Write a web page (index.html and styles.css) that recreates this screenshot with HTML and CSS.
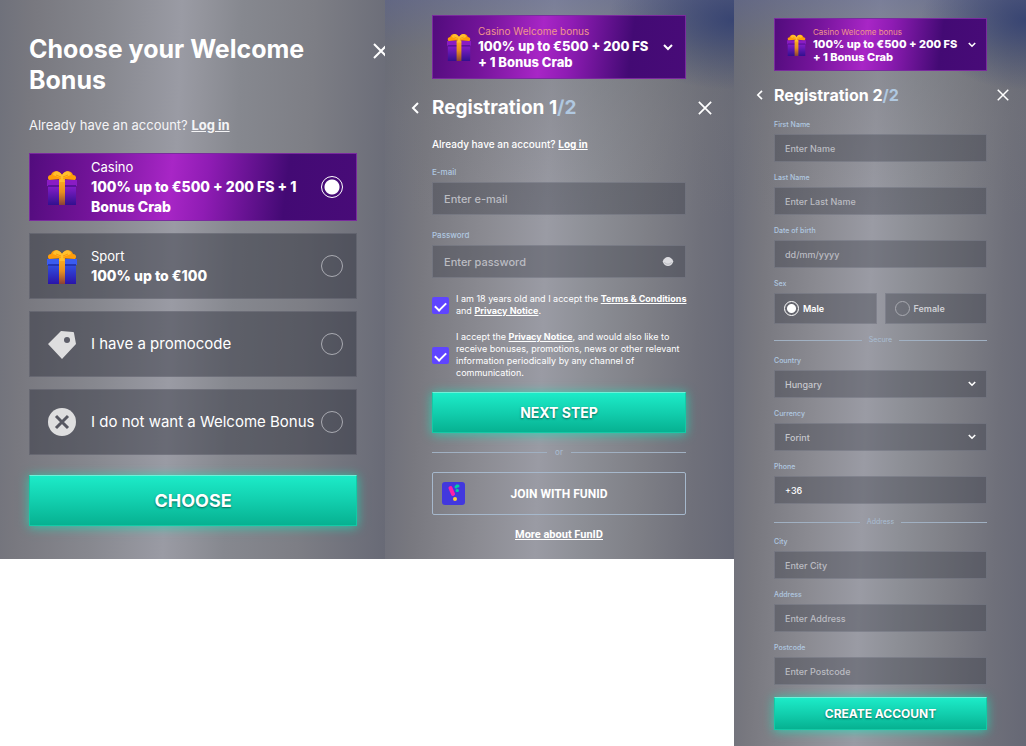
FILE: index.html
```html
<!DOCTYPE html>
<html lang="en">
<head>
<meta charset="utf-8">
<title>Welcome Bonus Registration</title>
<link rel="stylesheet" href="styles.css">
</head>

<body>
<!-- shared icons -->
<svg class="defs" aria-hidden="true">
	<defs>
		<linearGradient id="purple" x1="0" y1="0" x2="0" y2="1"><stop offset="0" stop-color="#8f1fd0"/><stop offset="1" stop-color="#31108f"/></linearGradient>
		<linearGradient id="blue" x1="0" y1="0" x2="0" y2="1"><stop offset="0" stop-color="#3355e8"/><stop offset="1" stop-color="#2a14a8"/></linearGradient>
		<linearGradient id="ribbon" x1="0" y1="0" x2="0" y2="1"><stop offset="0" stop-color="#ffb01f"/><stop offset="0.5" stop-color="#e8901f"/><stop offset="1" stop-color="#8a4038"/></linearGradient>
	</defs>
	<symbol id="bow" viewBox="0 0 30 35">
		<rect x="12" y="9" width="6" height="26" fill="url(#ribbon)"/>
		<path d="M14 9 L2 10 C0 8 1 5 4 5 C5 1 11 -1 15 5 C19 -1 25 1 26 5 C29 5 30 8 28 10 L16 9 Z" fill="#ff9d0a"/>
		<path d="M14 8 L6 5 C7 0 12 0 15 5 C18 0 23 0 24 5 L16 8 L18 12 H12 Z" fill="#ffc02e"/>
		<path d="M14 7 L9 5 M16 7 L21 5" stroke="#f59a10" stroke-width="1"/>
	</symbol>
	<symbol id="gift-casino" viewBox="0 0 30 35">
		<rect x="1" y="14" width="28" height="21" fill="url(#purple)"/>
		<rect x="0" y="10" width="30" height="6" fill="#8a1cc4"/>
		<rect x="1" y="15" width="28" height="2" fill="#5a129c"/>
		<use href="#bow"/>
	</symbol>
	<symbol id="gift-sport" viewBox="0 0 30 35">
		<rect x="1" y="14" width="28" height="21" fill="url(#blue)"/>
		<rect x="0" y="10" width="30" height="6" fill="#3a5cf0"/>
		<rect x="1" y="15" width="28" height="2" fill="#2436b4"/>
		<use href="#bow"/>
	</symbol>
	<symbol id="cross" viewBox="0 0 16 16"><path d="M1 1 L15 15 M15 1 L1 15" fill="none" stroke="#fff" stroke-width="2"/></symbol>
	<symbol id="back" viewBox="0 0 8 12"><path d="M7 1 L2 6 L7 11" fill="none" stroke="#fff" stroke-width="2"/></symbol>
	<symbol id="down" viewBox="0 0 10 7"><path d="M1 1 L5 5 L9 1" fill="none" stroke="#fff" stroke-width="2"/></symbol>
</svg>

<main class="screens">

<!-- bonus choice -->
<form class="panel panel-bonus">
	<header class="head">
		<h1>Choose your Welcome Bonus</h1>
		<button type="button" class="icon-btn" aria-label="Close"><svg class="cross"><use href="#cross"/></svg></button>
	</header>
	<p class="login">Already have an account? <a href="#">Log in</a></p>
	<div class="options">
		<label class="option option-active">
			<svg class="option-icon"><use href="#gift-casino"/></svg>
			<span class="option-text">Casino <b>100% up to €500 + 200 FS + 1 Bonus Crab</b></span>
			<input type="radio" name="bonus" checked>
		</label>
		<label class="option">
			<svg class="option-icon"><use href="#gift-sport"/></svg>
			<span class="option-text">Sport <b>100% up to €100</b></span>
			<input type="radio" name="bonus">
		</label>
		<label class="option">
			<svg class="option-icon" viewBox="0 0 30 35">
				<path d="M1 17 L14 4 L26 5 Q27 5 27 6 L29 17 L15 32 Z" fill="#dededf"/>
				<circle cx="20" cy="13" r="3" fill="#5c5d68"/>
			</svg>
			<span class="option-text option-plain">I have a promocode</span>
			<input type="radio" name="bonus">
		</label>
		<label class="option">
			<svg class="option-icon" viewBox="0 0 30 35">
				<circle cx="15" cy="17" r="14" fill="#dededf"/>
				<path d="M9 11 L21 23 M21 11 L9 23" stroke="#565761" stroke-width="3"/>
			</svg>
			<span class="option-text option-plain">I do not want a Welcome Bonus</span>
			<input type="radio" name="bonus">
		</label>
	</div>
	<button type="button" class="primary">CHOOSE</button>
</form>

<!-- step 1 -->
<form class="panel panel-step panel-one">
	<button type="button" class="banner">
		<svg class="gift"><use href="#gift-casino"/></svg>
		<span class="banner-text"><small>Casino Welcome bonus</small><b>100% up to €500 + 200 FS + 1 Bonus Crab</b></span>
		<svg class="down"><use href="#down"/></svg>
	</button>
	<header class="head">
		<button type="button" class="icon-btn" aria-label="Back"><svg class="back"><use href="#back"/></svg></button>
		<h2>Registration 1<span>/2</span></h2>
		<button type="button" class="icon-btn" aria-label="Close"><svg class="cross"><use href="#cross"/></svg></button>
	</header>
	<p class="login">Already have an account? <a href="#">Log in</a></p>
	<div class="field">
		<label for="email">E-mail</label>
		<input class="control" id="email" type="email" placeholder="Enter e-mail">
	</div>
	<div class="field">
		<label for="password">Password</label>
		<div class="control control-group">
			<input id="password" type="password" placeholder="Enter password">
			<button type="button" class="icon-btn" aria-label="Show password">
				<svg class="eye" viewBox="0 0 12 10"><path d="M0 5 Q2 0 6 0 Q10 0 12 5 Q10 10 6 10 Q2 10 0 5 Z" fill="#dcdce0"/><path d="M2 6 Q6 10 10 6" fill="none" stroke="#b4b5bb"/></svg>
			</button>
		</div>
	</div>
	<div class="agree">
		<input type="checkbox" id="age" checked>
		<label for="age">I am 18 years old and I accept the <a href="#">Terms &amp; Conditions</a> and <a href="#">Privacy Notice</a>.</label>
	</div>
	<div class="agree">
		<input type="checkbox" id="news" checked>
		<label for="news">I accept the <a href="#">Privacy Notice</a>, and would also like to receive bonuses, promotions, news or other relevant information periodically by any channel of communication.</label>
	</div>
	<button type="button" class="primary">NEXT STEP</button>
	<div class="divider">or</div>
	<button type="button" class="funid">
		<svg viewBox="0 0 23 23">
			<rect width="23" height="23" rx="3" fill="#4238de"/>
			<path d="M8.500 6 L11 12" stroke="#ff1fa8" stroke-width="4" stroke-linecap="round"/>
			<path d="M14 5 L15 4 H16 M15 8.500 H15.500" fill="none" stroke="#00d0a4" stroke-width="3" stroke-linecap="round"/>
			<circle cx="13" cy="17" r="2" fill="#ffcf3a"/>
		</svg>
		<span>JOIN WITH FUNID</span>
	</button>
	<a class="more" href="#">More about FunID</a>
</form>

<!-- step 2 -->
<form class="panel panel-step panel-two">
	<button type="button" class="banner">
		<svg class="gift"><use href="#gift-casino"/></svg>
		<span class="banner-text"><small>Casino Welcome bonus</small><b>100% up to €500 + 200 FS + 1 Bonus Crab</b></span>
		<svg class="down"><use href="#down"/></svg>
	</button>
	<header class="head">
		<button type="button" class="icon-btn" aria-label="Back"><svg class="back"><use href="#back"/></svg></button>
		<h2>Registration 2<span>/2</span></h2>
		<button type="button" class="icon-btn" aria-label="Close"><svg class="cross"><use href="#cross"/></svg></button>
	</header>
	<div class="field">
		<label for="first">First Name</label>
		<input class="control" id="first" type="text" placeholder="Enter Name">
	</div>
	<div class="field">
		<label for="last">Last Name</label>
		<input class="control" id="last" type="text" placeholder="Enter Last Name">
	</div>
	<div class="field">
		<label for="birth">Date of birth</label>
		<input class="control" id="birth" type="text" placeholder="dd/mm/yyyy">
	</div>
	<fieldset class="sex">
		<legend>Sex</legend>
		<label><input type="radio" name="sex" checked> Male</label>
		<label><input type="radio" name="sex"> Female</label>
	</fieldset>
	<div class="divider">Secure</div>
	<div class="field">
		<label for="country">Country</label>
		<div class="control control-group">
			<select id="country"><option>Hungary</option></select>
			<svg class="down"><use href="#down"/></svg>
		</div>
	</div>
	<div class="field">
		<label for="currency">Currency</label>
		<div class="control control-group">
			<select id="currency"><option>Forint</option></select>
			<svg class="down"><use href="#down"/></svg>
		</div>
	</div>
	<div class="field">
		<label for="phone">Phone</label>
		<input class="control" id="phone" type="tel" value="+36">
	</div>
	<div class="divider">Address</div>
	<div class="field">
		<label for="city">City</label>
		<input class="control" id="city" type="text" placeholder="Enter City">
	</div>
	<div class="field">
		<label for="address">Address</label>
		<input class="control" id="address" type="text" placeholder="Enter Address">
	</div>
	<div class="field">
		<label for="postcode">Postcode</label>
		<input class="control" id="postcode" type="text" placeholder="Enter Postcode">
	</div>
	<button type="button" class="primary">CREATE ACCOUNT</button>
</form>

</main>
</body>
</html>
```
FILE: styles.css
```css
* { box-sizing: border-box; }
body { margin: 0; background: white; color: white; font-family: Inter, "Liberation Sans", sans-serif; }
h1, h2, p { margin: 0; }
a { color: inherit; font-weight: bold; }
svg { display: block; flex: none; }
button, input, select { font: inherit; color: inherit; }
button { border: none; padding: 0; cursor: pointer; }
.defs { position: absolute; width: 0; height: 0; }

.screens { display: grid; grid-template-columns: 385fr 349fr 292fr; align-items: start; }
.panel {
	display: flex; flex-direction: column; overflow: hidden;
	background: linear-gradient(92deg, #6f717b 0%, #78787f 8%, #87888f 27%, #9a9ba4 45%, #94959d 50%, #86888f 60%, #7d7e85 78%, #686a76 100%);
}
.panel-bonus { padding: 34px 28px 33px 29px; }
.panel-step {
	background:
		radial-gradient(ellipse 36% 70px at 100% 20px, rgba(48, 62, 112, 0.85), transparent),
		linear-gradient(rgba(90, 98, 142, 0.5), rgba(105, 108, 115, 0.35) 50px, rgba(115, 116, 122, 0.25) 120px, transparent 220px),
		linear-gradient(92deg, #6a6c78 0%, #78787f 12%, #8b8b92 30%, #9a9ba4 46%, #8d8f96 58%, #7e7f86 74%, #6f707a 88%, #666875 100%);
}
.panel-one { padding: 15px 48px 16px 47px; }
.panel-two { padding: 18px 39px 16px 40px; }

/* headings */
.head { display: flex; align-items: center; }
.head h1, .head h2 { flex: 1; }
.head h1 { font-size: 25px; line-height: 31px; }
.head h2 span { color: #b0c8e0; }
.icon-btn { background: none; }
.panel-bonus .head { align-items: flex-start; gap: 16px; margin-right: -32px; }
.panel-bonus .head .icon-btn { margin-top: 9px; }
.panel-one .head { margin: 16px -26px 0 -21px; gap: 13px; }
.panel-one h2 { font-size: 19px; line-height: 26px; }
.panel-two .head { margin: 12px -22px 12px -18px; gap: 11px; }
.panel-two h2 { font-size: 16px; line-height: 24px; }
.cross { width: 16px; height: 16px; }
.back { width: 8px; height: 12px; }
.panel-one .cross { width: 14px; height: 14px; }
.panel-two .cross { width: 12px; height: 12px; }
.panel-two .back { width: 7px; height: 10px; }

.panel-bonus .login { margin: 20px 0 19px; font-size: 13px; line-height: 18px; color: #f4f4f6; }
.panel-one .login { margin: 15px 0 13px; font-size: 10px; line-height: 16px; font-weight: 500; }

/* bonus options */
.options { display: flex; flex-direction: column; gap: 12px; }
.option { display: flex; align-items: center; gap: 14px; min-height: 66px; padding: 3px 13px 3px 17px; background: rgba(32, 35, 48, 0.4); border: 1px solid rgba(150, 152, 165, 0.25); }
.option-active, .banner { background: linear-gradient(97deg, #520c7d 0%, #74149a 20%, #a826c6 43%, #8f1cb4 54%, #430a74 78%, #480b78 100%); border: 1px solid #7a2b9e; }
.option-icon { width: 30px; height: 35px; }
.option-text { flex: 1; min-width: 0; font-size: 13px; line-height: 20px; color: white; }
.option-text b { display: block; font-size: 14px; font-weight: 800; }
.option-plain { font-size: 15px; white-space: nowrap; }

input[type=radio] { appearance: none; flex: none; width: 22px; height: 22px; margin: 0; border: 1px solid #a9aab1; border-radius: 50%; }
input[type=radio]:checked { border-color: white; background: radial-gradient(circle, white 7px, transparent 8px); }

/* bonus banner */
.banner { display: flex; align-items: center; text-align: left; }
.banner-text { flex: 1; }
.banner small, .banner b { display: block; }
.banner small { color: #f0968c; }
.banner b { font-weight: 800; }
.panel-one .banner { height: 64px; padding: 0 12px 0 14px; gap: 7px; }
.panel-one .banner small { font-size: 10px; line-height: 14px; }
.panel-one .banner b { font-size: 13px; line-height: 16px; }
.panel-one .gift { width: 24px; height: 28px; }
.panel-two .banner { height: 53px; padding: 0 10px 0 12px; gap: 7px; }
.panel-two .banner small { font-size: 8px; line-height: 12px; }
.panel-two .banner b { font-size: 11px; line-height: 13px; }
.panel-two .gift { width: 19px; height: 22px; }
.down { width: 10px; height: 7px; }
.panel-two .down { width: 8px; height: 6px; }

/* fields */
.field label, .sex legend { display: block; padding: 0; color: #b0c8e0; font-weight: 500; }
.control { display: block; width: 100%; background: rgba(48, 51, 64, 0.35); border: 1px solid rgba(160, 162, 175, 0.3); outline: none; font-weight: 500; }
.control-group { display: flex; align-items: center; }
.control-group input, .control-group select { flex: 1; min-width: 0; appearance: none; background: none; border: none; outline: none; padding: 0; }
.control-group select { color: #c6c7cc; }
::placeholder { color: #bbbcc2; opacity: 1; }
.panel-one .field label { font-size: 8px; line-height: 14px; margin-bottom: 3px; }
.panel-one .field { margin-bottom: 13px; }
.panel-one .control { height: 33px; padding: 0 11px; font-size: 11px; }
.panel-two .field { margin-bottom: 10px; }
.panel-two .field label, .sex legend { font-size: 7px; line-height: 12px; margin-bottom: 3px; }
.panel-two .control { height: 28px; padding: 0 10px; font-size: 9px; }
.eye { width: 12px; height: 9px; }

.sex { display: flex; gap: 8px; margin: 0; padding: 0; border: none; }
.sex label { flex: 1; display: flex; align-items: center; gap: 4px; height: 31px; padding: 0 9px; background: rgba(48, 51, 64, 0.35); border: 1px solid rgba(160, 162, 175, 0.3); font-size: 9px; font-weight: 600; color: #cdced3; }
.sex label:has(:checked) { color: white; }
.sex input[type=radio] { width: 15px; height: 15px; }
.sex input[type=radio]:checked { background: radial-gradient(circle, white 4px, transparent 5px); }

/* consents */
.agree { display: flex; align-items: center; gap: 7px; margin: 2px -8px 12px 0; font-size: 9px; line-height: 12px; }
.agree label { flex: 1; }
.agree input { appearance: none; flex: none; display: flex; justify-content: center; width: 17px; height: 17px; margin: 0; border-radius: 2px; background: #5f45ff; }
.agree input:checked::after { content: ""; width: 5px; height: 9px; margin-top: 3px; border: solid white; border-width: 0 2px 2px 0; transform: rotate(45deg); }

/* buttons */
.primary {
	font-weight: bold; text-shadow: 0 1px 2px rgba(0, 60, 50, 0.7); border: 1px solid #14c9a6; border-top-color: #6ff0d8;
	background: linear-gradient(#1cebc8, #12cfae 50%, #06b191); box-shadow: 0 1px 10px rgba(20, 225, 185, 0.75);
}
.panel-bonus .primary { height: 51px; margin-top: 20px; font-size: 18px; }
.panel-one .primary { height: 41px; margin-top: 1px; font-size: 14px; }
.panel-two .primary { height: 33px; margin-top: 2px; font-size: 12px; }

.divider { display: flex; align-items: center; color: #a9bdd2; }
.divider::before, .divider::after { content: ""; flex: 1; height: 1px; background: #a0b0c2; }
.panel-one .divider { gap: 8px; margin: 12px 0; font-size: 8px; line-height: 15px; }
.panel-two .divider { gap: 7px; margin: 10px 0 9px; font-size: 7px; line-height: 12px; }
.panel-two .field + .divider { margin: 2px 0 8px; }

.funid { display: flex; align-items: center; height: 43px; padding: 0 32px 0 9px; background: none; border: 1px solid #a6b8cc; border-radius: 2px; font: bold 12px Roboto, sans-serif; }
.funid svg { width: 23px; height: 23px; }
.funid span { flex: 1; }
.more { align-self: center; margin-top: 12px; font: bold 11px/16px Roboto, sans-serif; }
```
